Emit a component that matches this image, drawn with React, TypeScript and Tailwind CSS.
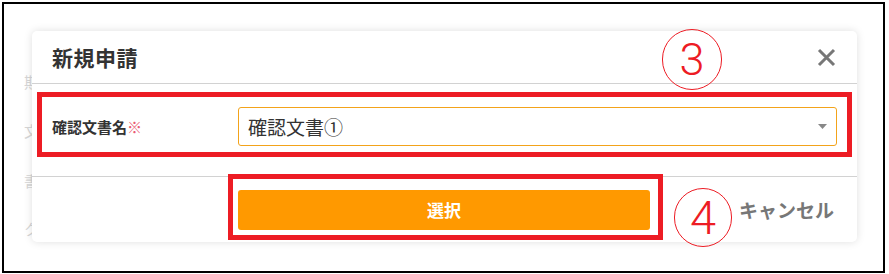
import React from "react";

const jp = { fontFamily: '"Noto Sans CJK JP", "Noto Sans", sans-serif' };
const num = { fontFamily: 'Roboto, "Liberation Sans", Arial, sans-serif' };

export default function App() {
  return (
    <div className="relative w-[889px] h-[274px] bg-white overflow-hidden" style={jp}>
      {/* frame */}
      <div className="ml-[2px] mt-[2px] w-[883px] h-[271px] border-2 border-black">
        {/* underlying page (faint) */}
        <div className="ml-[19px] mt-[21px] w-[843px] h-[222px] flex flex-col text-[15px] leading-none text-[#d6d6d6] pl-[1px]">
          <div className="mt-[49px]">期</div>
          <div className="mt-[34px]">文</div>
          <div className="mt-[35px]">書</div>
          <div className="mt-[33px]">ク</div>
        </div>
      </div>

      {/* modal */}
      <div className="absolute left-[32px] top-[31px] w-[825px] h-[211px] bg-white rounded-[5px] shadow-[0_0_9px_rgba(0,0,0,0.13)] flex flex-col">
        <div className="h-[53px] border-b border-[#d2d2d2] flex items-center justify-between pl-[20px] pr-[21px]">
          <span className="text-[21px] font-bold text-[#333] leading-none tracking-[0.5px]">新規申請</span>
          <svg width="19" height="19" viewBox="0 0 19 19">
            <path d="M2 2 L17 17 M17 2 L2 17" stroke="#777" strokeWidth="3" strokeLinecap="butt" />
          </svg>
        </div>
        <div className="h-[93px] border-b border-[#d2d2d2] pl-[20px] pr-[20px] pt-[23px]">
          <div className="flex items-center h-[39px]">
            <div className="w-[186px] text-[15px] font-bold text-[#333] leading-none">
              確認文書名<span className="text-[#ea5a72] font-normal">※</span>
            </div>
            <div className="w-[599px] h-[39px] border border-[#f3a31a] rounded-[3px] flex items-center justify-between pl-[9px] pr-[9px]">
              <span className="text-[19px] text-[#333] leading-none">確認文書①</span>
              <svg width="9" height="5" viewBox="0 0 9 5">
                <path d="M0 0 L9 0 L4.5 5 Z" fill="#888" />
              </svg>
            </div>
          </div>
        </div>
        <div className="flex-1 flex items-center pl-[206px]">
          <button className="w-[412px] h-[40px] bg-[#ff9900] rounded-[3px] text-white text-[17px] font-bold leading-none">
            選択
          </button>
          <span className="ml-[89px] text-[19px] font-bold text-[#777] leading-none">キャンセル</span>
        </div>
      </div>

      {/* annotations */}
      <div className="absolute left-[37px] top-[92px] w-[815px] h-[65px] border-[5px] border-[#ed1c24]" />
      <div className="absolute left-[228px] top-[174px] w-[435px] h-[66px] border-[5px] border-[#ed1c24]" />
      <div
        className="absolute left-[662px] top-[29px] w-[60px] h-[61px] rounded-full border-[1.5px] border-[#ed1c24] flex items-center justify-center text-[45px] font-light leading-none text-[#ed1c24]"
        style={num}
      >
        3
      </div>
      <div
        className="absolute left-[674px] top-[188px] w-[58px] h-[59px] rounded-full border-[1.5px] border-[#ed1c24] flex items-center justify-center text-[47px] font-light leading-none text-[#ed1c24]"
        style={num}
      >
        4
      </div>
    </div>
  );
}
